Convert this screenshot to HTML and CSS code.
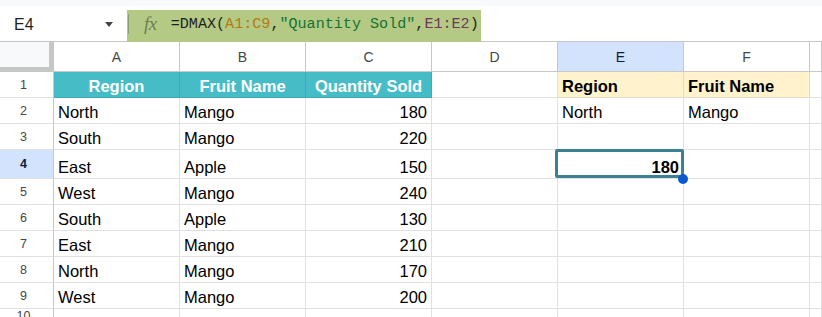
FILE: index.html
```html
<!DOCTYPE html>
<html>
<head>
<meta charset="utf-8">
<link rel="stylesheet" href="styles.css">
</head>
<body>
<div class="topstrip"></div>
<div class="fbar">
  <div class="namebox"><span class="nb-text">E4</span><span class="nb-arrow"></span></div>
  <div class="formula">
    <span class="sep"></span>
    <span class="fx">fx</span>
    <span class="ftext">=DMAX(<span class="r1">A1:C9</span>,<span class="str">"Quantity Sold"</span>,<span class="r2">E1:E2</span>)</span>
  </div>
</div>
<div class="sheet">
  <div class="corner"></div>
  <div class="ch">A</div><div class="ch">B</div><div class="ch">C</div><div class="ch">D</div><div class="ch ch-sel">E</div><div class="ch">F</div><div class="ch"></div>

  <div class="rh">1</div>
  <div class="c th">Region</div><div class="c th">Fruit Name</div><div class="c th">Quantity Sold</div><div class="c"></div><div class="c yh">Region</div><div class="c yh">Fruit Name</div><div class="c"></div>

  <div class="rh">2</div>
  <div class="c">North</div><div class="c">Mango</div><div class="c n">180</div><div class="c"></div><div class="c">North</div><div class="c">Mango</div><div class="c"></div>

  <div class="rh">3</div>
  <div class="c">South</div><div class="c">Mango</div><div class="c n">220</div><div class="c"></div><div class="c"></div><div class="c"></div><div class="c"></div>

  <div class="rh rh-sel">4</div>
  <div class="c">East</div><div class="c">Apple</div><div class="c n">150</div><div class="c"></div><div class="c n b sel">180<span class="handle"></span></div><div class="c"></div><div class="c"></div>

  <div class="rh">5</div>
  <div class="c">West</div><div class="c">Mango</div><div class="c n">240</div><div class="c"></div><div class="c"></div><div class="c"></div><div class="c"></div>

  <div class="rh">6</div>
  <div class="c">South</div><div class="c">Apple</div><div class="c n">130</div><div class="c"></div><div class="c"></div><div class="c"></div><div class="c"></div>

  <div class="rh">7</div>
  <div class="c">East</div><div class="c">Mango</div><div class="c n">210</div><div class="c"></div><div class="c"></div><div class="c"></div><div class="c"></div>

  <div class="rh">8</div>
  <div class="c">North</div><div class="c">Mango</div><div class="c n">170</div><div class="c"></div><div class="c"></div><div class="c"></div><div class="c"></div>

  <div class="rh">9</div>
  <div class="c">West</div><div class="c">Mango</div><div class="c n">200</div><div class="c"></div><div class="c"></div><div class="c"></div><div class="c"></div>

  <div class="rh">10</div>
  <div class="c"></div><div class="c"></div><div class="c"></div><div class="c"></div><div class="c"></div><div class="c"></div><div class="c"></div>
</div>
</body>
</html>
```
FILE: styles.css
```css
* { box-sizing: border-box; }
html, body { margin: 0; padding: 0; background: #ffffff; overflow: hidden; }
body { width: 822px; height: 317px; font-family: "Liberation Sans", Arial, sans-serif; }

.topstrip { height: 6px; background: #f8f9fa; }

.fbar {
  height: 35px;
  display: flex;
  align-items: flex-end;
  position: relative;
  z-index: 2;
}
.namebox {
  width: 127px;
  height: 35px;
  display: flex;
  align-items: center;
  padding-left: 14px;
  padding-right: 14px;
  justify-content: space-between;
}
.nb-text { font-size: 16px; color: #1f1f1f; padding-top: 2px; }
.nb-arrow {
  width: 0; height: 0;
  border-left: 4.5px solid transparent;
  border-right: 4.5px solid transparent;
  border-top: 5px solid #444746;
  margin-top: 2px;
}
.formula {
  width: 354px;
  height: 32px;
  margin-bottom: -1px;
  background: #b3c984;
  display: flex;
  align-items: center;
}
.sep {
  width: 1px;
  height: 20px;
  background: #8d9c72;
  margin-left: 1px;
  margin-top: -4px;
}
.fx {
  font-family: "Liberation Serif", serif;
  font-style: italic;
  font-size: 19px;
  color: #6f7f55;
  margin-left: 15px;
  margin-top: -4px;
  letter-spacing: -0.5px;
}
.ftext {
  font-family: "Liberation Mono", "DejaVu Sans Mono", monospace;
  font-size: 15.1px;
  color: #1f1f1f;
  margin-left: 14px;
  margin-top: -5px;
  white-space: nowrap;
}
.r1 { color: #b57a14; }
.str { color: #137333; }
.r2 { color: #6b3a5e; }

.sheet {
  display: grid;
  grid-template-columns: 54px repeat(6, 126px) 1fr;
  grid-template-rows: 30px 26px 26px 26px 29px 26px 26px 26px 26px 26px;
  border-top: 1px solid #c4c7c5;
}

.corner {
  background: #f8f9fa;
  border-right: 5px solid #c4c7c5;
  border-bottom: 5px solid #c4c7c5;
}
.ch {
  border-right: 1px solid #c7c7c7;
  border-bottom: 1px solid #c7c7c7;
  display: flex;
  align-items: center;
  justify-content: center;
  font-size: 14px;
  color: #444746;
  padding-top: 1px;
}
.ch-sel { background: #d3e3fd; color: #0b1b3a; }

.rh {
  border-right: 1px solid #c7c7c7;
  border-bottom: 1px solid #e1e1e1;
  display: flex;
  align-items: center;
  justify-content: center;
  font-size: 12.5px;
  color: #444746;
  padding-right: 6px;
}
.rh-sel { background: #d3e3fd; color: #0b1b3a; font-weight: bold; }

.c {
  border-right: 1px solid #e1e1e1;
  border-bottom: 1px solid #e1e1e1;
  display: flex;
  align-items: flex-end;
  padding: 0 4px 1px 4px;
  font-size: 16.5px;
  line-height: 19px;
  color: #000000;
  white-space: nowrap;
}
.n { justify-content: flex-end; }
.b { font-weight: bold; }

.th {
  background: #46bdc6;
  color: #ffffff;
  font-weight: bold;
  justify-content: center;
  border-right-color: #3eaab2;
  border-bottom-color: #3eaab2;
}
.yh {
  background: #fff2cc;
  font-weight: bold;
  border-right-color: #e4dcc4;
  border-bottom-color: #e4dcc4;
}

.sel { position: relative; }
.sel::before {
  content: "";
  position: absolute;
  left: -3px;
  right: -1px;
  top: -1px;
  bottom: 0;
  border: 3px solid #3c8091;
  border-radius: 2px;
}
.handle {
  position: absolute;
  right: -5px;
  bottom: -6px;
  width: 10px;
  height: 10px;
  border-radius: 50%;
  background: #0b57d0;
  z-index: 1;
}
```
